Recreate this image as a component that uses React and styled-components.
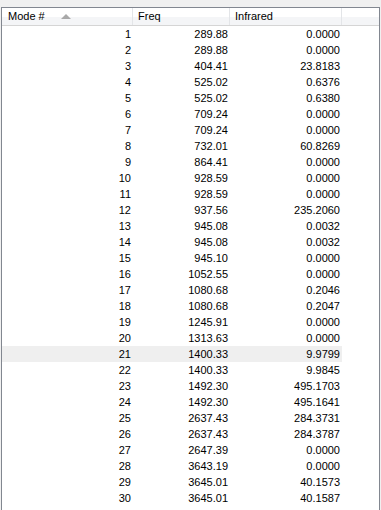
import styled, { createGlobalStyle } from 'styled-components'

const GlobalStyle = createGlobalStyle`
  html, body {
    margin: 0;
    padding: 0;
    background: #f0f0f0;
    overflow: hidden;
  }
`

const COLS = '131px 97px 112px 1fr'

const modes = [
  [1, '289.88', '0.0000'],
  [2, '289.88', '0.0000'],
  [3, '404.41', '23.8183'],
  [4, '525.02', '0.6376'],
  [5, '525.02', '0.6380'],
  [6, '709.24', '0.0000'],
  [7, '709.24', '0.0000'],
  [8, '732.01', '60.8269'],
  [9, '864.41', '0.0000'],
  [10, '928.59', '0.0000'],
  [11, '928.59', '0.0000'],
  [12, '937.56', '235.2060'],
  [13, '945.08', '0.0032'],
  [14, '945.08', '0.0032'],
  [15, '945.10', '0.0000'],
  [16, '1052.55', '0.0000'],
  [17, '1080.68', '0.2046'],
  [18, '1080.68', '0.2047'],
  [19, '1245.91', '0.0000'],
  [20, '1313.63', '0.0000'],
  [21, '1400.33', '9.9799'],
  [22, '1400.33', '9.9845'],
  [23, '1492.30', '495.1703'],
  [24, '1492.30', '495.1641'],
  [25, '2637.43', '284.3731'],
  [26, '2637.43', '284.3787'],
  [27, '2647.39', '0.0000'],
  [28, '3643.19', '0.0000'],
  [29, '3645.01', '40.1573'],
  [30, '3645.01', '40.1587'],
]

const ListView = styled.div`
  margin: 7px 0 0 1px;
  width: 377px;
  height: 520px;
  background: #fff;
  border: 1px solid #828790;
  border-bottom: none;
  font-family: "Liberation Sans", Arial, sans-serif;
  font-size: 11px;
  color: #000;
`

const Header = styled.div`
  display: grid;
  grid-template-columns: ${COLS};
  height: 17px;
  background: linear-gradient(#ffffff 0%, #ffffff 50%, #f4f5f7 51%, #f4f5f7 100%);
  border-bottom: 1px solid #d5d5d5;
`

const HeaderCell = styled.div`
  display: flex;
  align-items: center;
  gap: 16px;
  padding-left: ${p => p.$pad || 5}px;
  border-right: 1px solid #e3e5e8;
  line-height: 17px;
  &:last-child {
    border-right: none;
  }
`

const SortArrow = styled.span`
  width: 0;
  height: 0;
  border-left: 5px solid transparent;
  border-right: 5px solid transparent;
  border-bottom: 5px solid #a9a9a9;
  margin-top: -1px;
`

const Row = styled.div`
  display: grid;
  grid-template-columns: ${COLS};
  height: 16px;
  line-height: 16px;
  background: ${p => (p.$hover ? '#efefef' : 'transparent')};
`

const Cell = styled.div`
  text-align: right;
  padding-right: ${p => p.$pr || 2}px;
  white-space: nowrap;
`

const Blank = styled.div`
  background: #fff;
`

export default function App() {
  return (
    <>
      <GlobalStyle />
      <ListView>
        <Header>
          <HeaderCell $pad={6}>
            Mode #
            <SortArrow />
          </HeaderCell>
          <HeaderCell $pad={5}>Freq</HeaderCell>
          <HeaderCell $pad={5}>Infrared</HeaderCell>
          <HeaderCell />
        </Header>
        {modes.map(([n, freq, ir]) => (
          <Row key={n} $hover={n === 21}>
            <Cell $pr={2}>{n}</Cell>
            <Cell $pr={2}>{freq}</Cell>
            <Cell $pr={2}>{ir}</Cell>
            <Blank />
          </Row>
        ))}
      </ListView>
    </>
  )
}
